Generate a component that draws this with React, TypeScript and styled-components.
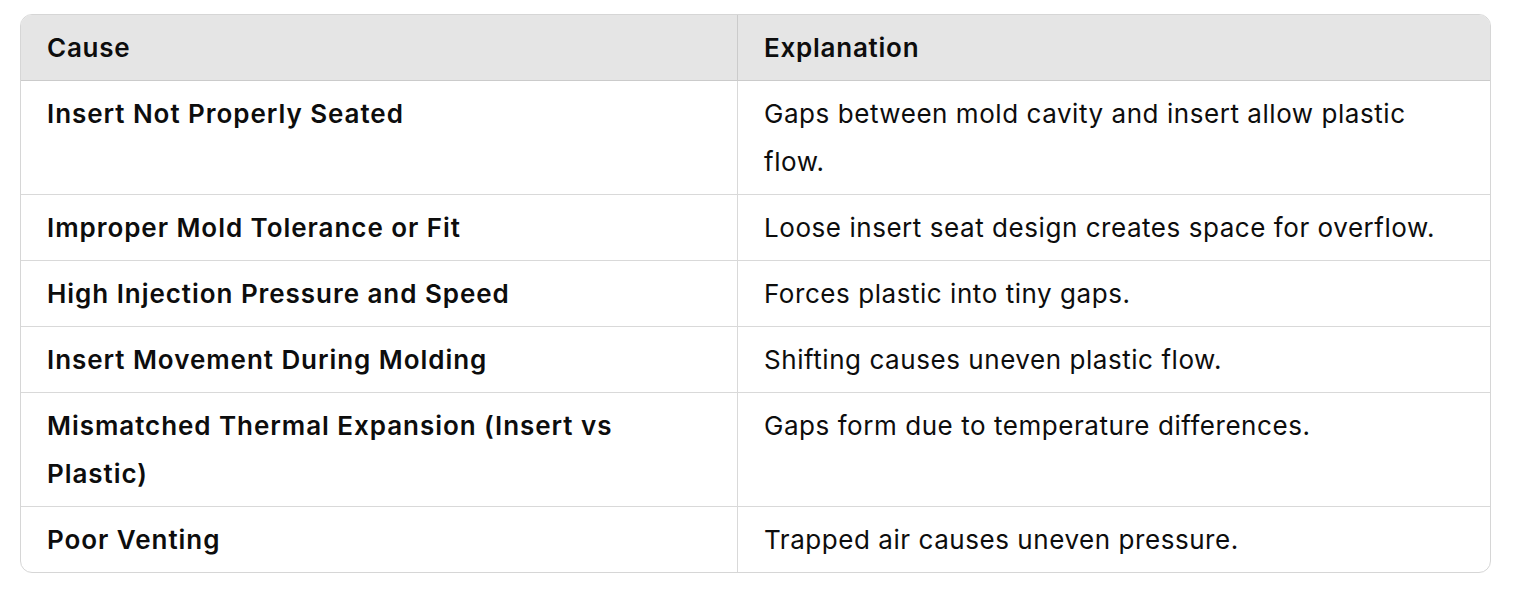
import React from "react";
import styled, { createGlobalStyle } from "styled-components";

const Global = createGlobalStyle`
  html, body { margin: 0; padding: 0; background: #ffffff; }
  body { font-family: Inter, "Noto Sans", sans-serif; color: #0d0d0d; }
`;

const Page = styled.div`
  padding: 14px 45px 25px 20px;
`;

const Frame = styled.div`
  border: 1px solid #d6d6d6;
  border-radius: 12px;
  overflow: hidden;
`;

const Table = styled.table`
  width: 100%;
  border-collapse: separate;
  border-spacing: 0;
  table-layout: fixed;
  font-size: 26px;
  line-height: 48px;
`;

const HeadCell = styled.th<{ $last?: boolean }>`
  background: #e5e5e5;
  text-align: left;
  font-weight: 600;
  letter-spacing: 0.75px;
  padding: 9px 48px 8px 26px;
  border-bottom: 1px solid #cbcbcb;
  border-right: ${(p) => (p.$last ? "none" : "1px solid #cbcbcb")};
`;

const Cell = styled.td<{ $bold?: boolean; $last?: boolean; $bottom?: boolean }>`
  vertical-align: top;
  font-weight: ${(p) => (p.$bold ? 600 : 400)};
  letter-spacing: ${(p) => (p.$bold ? "0.95px" : "0.55px")};
  padding: 9px 48px 8px 26px;
  border-bottom: ${(p) => (p.$bottom ? "none" : "1px solid #d9d9d9")};
  border-right: ${(p) => (p.$last ? "none" : "1px solid #d9d9d9")};
`;

const rows: [string, string][] = [
  ["Insert Not Properly Seated", "Gaps between mold cavity and insert allow plastic flow."],
  ["Improper Mold Tolerance or Fit", "Loose insert seat design creates space for overflow."],
  ["High Injection Pressure and Speed", "Forces plastic into tiny gaps."],
  ["Insert Movement During Molding", "Shifting causes uneven plastic flow."],
  ["Mismatched Thermal Expansion (Insert vs Plastic)", "Gaps form due to temperature differences."],
  ["Poor Venting", "Trapped air causes uneven pressure."],
];

export default function App() {
  return (
    <>
      <Global />
      <Page>
        <Frame>
          <Table>
            <colgroup>
              <col style={{ width: 717 }} />
              <col />
            </colgroup>
            <thead>
              <tr>
                <HeadCell>Cause</HeadCell>
                <HeadCell $last>Explanation</HeadCell>
              </tr>
            </thead>
            <tbody>
              {rows.map(([c, e], i) => (
                <tr key={c}>
                  <Cell $bold $bottom={i === rows.length - 1}>{c}</Cell>
                  <Cell $last $bottom={i === rows.length - 1}>{e}</Cell>
                </tr>
              ))}
            </tbody>
          </Table>
        </Frame>
      </Page>
    </>
  );
}
